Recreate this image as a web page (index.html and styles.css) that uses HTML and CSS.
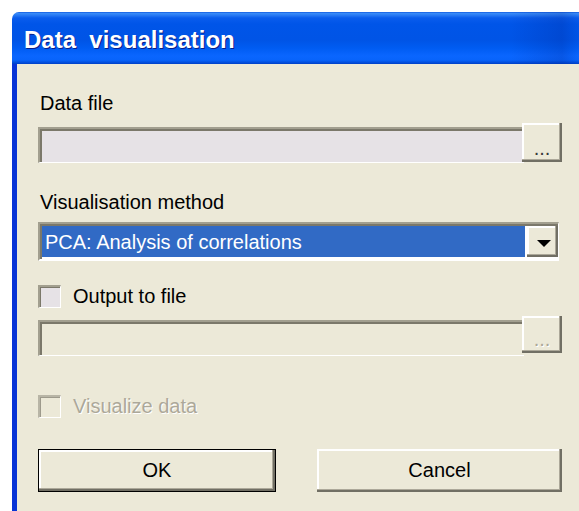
FILE: index.html
```html
<!DOCTYPE html>
<html lang="en">
<head>
<meta charset="utf-8">
<title>Data visualisation</title>
<link rel="stylesheet" href="styles.css">
</head>
<body>
  <div class="window">
    <div class="titlebar"><span class="title">Data&nbsp; visualisation</span></div>
    <div class="frame">
      <div class="content">
        <div class="label">Data file</div>
        <div class="filerow">
          <div class="field"></div>
          <button class="browse" type="button">...</button>
        </div>

        <div class="label label-gap">Visualisation method</div>
        <div class="combo">
          <div class="combo-value">PCA: Analysis of correlations</div>
          <div class="combo-arrow">
            <svg width="14" height="7" viewBox="0 0 14 7"><polygon points="0,0 14,0 7,7" fill="#000"/></svg>
          </div>
        </div>

        <label class="check check-output">
          <span class="box"></span>
          <span class="check-text">Output to file</span>
        </label>
        <div class="filerow filerow-tight">
          <div class="field field-disabled"></div>
          <button class="browse browse-disabled" type="button">...</button>
        </div>

        <label class="check check-visualize disabled">
          <span class="box"></span>
          <span class="check-text">Visualize data</span>
        </label>

        <div class="actions">
          <button class="btn btn-default" type="button">OK</button>
          <button class="btn btn-cancel" type="button">Cancel</button>
        </div>
      </div>
    </div>
  </div>
</body>
</html>
```

FILE: styles.css
```css
html, body {
  margin: 0;
  padding: 0;
  background: #ffffff;
  overflow: hidden;
}

body {
  width: 579px;
  height: 511px;
  font-family: "Liberation Sans", Arial, sans-serif;
  font-size: 20px;
  color: #000;
}

.window {
  margin: 12px 0 0 12px;
  width: 567px;
  height: 499px;
  display: flex;
  flex-direction: column;
}

/* Luna-style caption bar */
.titlebar {
  height: 52px;
  box-sizing: border-box;
  padding: 4px 0 0 12px;
  line-height: 48px;
  border-top-left-radius: 7px;
  background:
    linear-gradient(to right, rgba(0, 0, 0, 0) 88%, rgba(0, 20, 120, 0.18) 97%, rgba(0, 0, 0, 0) 100%),
    linear-gradient(to bottom,
      #0048d8 0px,
      #3d8ef8 1px,
      #2a7cf4 3px,
      #0a5cec 6px,
      #0055e8 12px,
      #0054e6 28px,
      #005cf2 36px,
      #0a66ff 44px,
      #0864fb 48px,
      #0049d6 51px,
      #0040c4 52px);
}

.title {
  font-family: "Liberation Sans", Arial, sans-serif;
  font-weight: bold;
  font-size: 24px;
  color: #fff;
  white-space: pre;
  text-shadow: 1px 1px 0 #0a1e8a;
}

.frame {
  flex: 1;
  display: flex;
  border-style: solid;
  border-width: 0 0 0 5px;
  border-image: linear-gradient(to right, #0834d6, #1464f4 60%, #0a52e6) 1;
}

.content {
  flex: 1;
  display: flex;
  flex-direction: column;
  padding: 27px 17px 0 21px;
  background: #ece9d8;
}

.label {
  line-height: 24px;
  padding-left: 2px;
}

.label-gap {
  margin-top: 27px;
}

/* text field + browse button */
.filerow {
  margin-top: 8px;
  height: 40px;
  display: flex;
  align-items: flex-start;
}

.field {
  flex: 1;
  height: 36px;
  margin-top: 4px;
  margin-right: -2px;
  box-sizing: border-box;
  border-style: solid;
  border-width: 2px 0 1px 2px;
  border-color: #a29f8f #fff #fff #a29f8f;
  box-shadow: inset 2px 2px 0 #7b786a;
  background: #e6e2e6;
}

.field-disabled {
  background: #ece9d8;
}

.browse {
  position: relative;
  width: 40px;
  height: 39px;
  margin: 0;
  padding: 0 0 4px;
  border: none;
  background: #ece9d8;
  font-family: "Liberation Sans", Arial, sans-serif;
  font-size: 20px;
  line-height: 20px;
  color: #3a3a3a;
  box-shadow:
    inset -2px -2px 0 #716f64,
    inset -3px -3px 0 #aca899,
    inset 2px 2px 0 #fff;
  display: flex;
  align-items: flex-end;
  justify-content: center;
}

.filerow-tight .browse {
  height: 37px;
}

.browse-disabled {
  color: #aca899;
  text-shadow: 1px 1px 0 #fff;
}

/* drop-down list */
.combo {
  margin-top: 8px;
  margin-right: 3px;
  height: 39px;
  box-sizing: border-box;
  border-style: solid;
  border-width: 2px 1px 2px 2px;
  border-color: #a29f8f #fff #fff #a29f8f;
  padding: 2px 0 2px 2px;
  box-shadow: inset 2px 2px 0 #7b786a;
  background: #fff;
  display: flex;
}

.combo-value {
  flex: 1;
  margin-right: 2px;
  background: #316ac5;
  color: #fff;
  padding: 2px 0 0 3px;
  line-height: 29px;
  box-sizing: border-box;
  white-space: nowrap;
}

.combo-arrow {
  width: 31px;
  background: #ece9d8;
  box-shadow:
    inset -2px -2px 0 #716f64,
    inset -3px -3px 0 #aca899,
    inset 2px 2px 0 #fff;
  display: flex;
  align-items: center;
  justify-content: center;
}

.combo-arrow svg {
  display: block;
  margin: 4px 0 0 3px;
}

/* check boxes */
.check {
  display: flex;
  align-items: flex-start;
  height: 24px;
  line-height: 24px;
}

.check-output {
  margin-top: 23px;
}

.check-visualize {
  margin-top: 38px;
}

.box {
  width: 23px;
  height: 23px;
  margin-top: 1px;
  box-sizing: border-box;
  border-style: solid;
  border-width: 2px 1px 1px 2px;
  border-color: #a29f8f #fff #fff #a29f8f;
  box-shadow: inset 1px 1px 0 #7b786a;
  background: #e6e2e6;
}

.check-text {
  margin-left: 12px;
}

.disabled .box {
  background: #ece9d8;
  border-color: #b8b5a6 #fff #fff #b8b5a6;
  box-shadow: inset 1px 1px 0 #9d9a8c;
}

.disabled .check-text {
  color: #aca899;
  text-shadow: 1px 1px 0 #fff;
}

/* dialog buttons */
.actions {
  margin-top: 31px;
  display: flex;
  justify-content: space-between;
}

.btn {
  height: 43px;
  margin: 0;
  padding: 0;
  background: #ece9d8;
  font-family: "Liberation Sans", Arial, sans-serif;
  font-size: 20px;
  color: #000;
  border: none;
  box-shadow:
    inset -2px -2px 0 #716f64,
    inset -3px -3px 0 #aca899,
    inset 2px 2px 0 #fff;
}

.btn-default {
  width: 238px;
  border: 1px solid #000;
  box-shadow:
    inset -2px -2px 0 #716f64,
    inset -3px -3px 0 #aca899,
    inset 2px 2px 0 #fff;
}

.btn-cancel {
  width: 245px;
}
```
